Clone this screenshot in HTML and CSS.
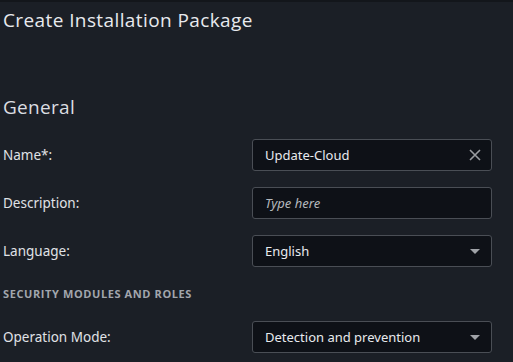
FILE: index.html
```html
<!DOCTYPE html>
<html lang="en">
<head>
  <meta charset="UTF-8">
  <title>Create Installation Package</title>
  <link rel="stylesheet" href="styles.css">
</head>
<body>
  <div class="topline"></div>
  <h1 class="title">Create Installation Package</h1>

  <h2 class="section">General</h2>

  <div class="row">
    <label class="label">Name*:</label>
    <div class="field">
      <span class="value">Update-Cloud</span>
      <svg class="icon" width="12" height="12" viewBox="0 0 12 12">
        <path d="M1 1 L11 11 M11 1 L1 11" stroke="#9a9ca0" stroke-width="1.6" fill="none"/>
      </svg>
    </div>
  </div>

  <div class="row">
    <label class="label">Description:</label>
    <div class="field">
      <span class="placeholder">Type here</span>
    </div>
  </div>

  <div class="row">
    <label class="label">Language:</label>
    <div class="field">
      <span class="value">English</span>
      <span class="caret"></span>
    </div>
  </div>

  <div class="subhead">SECURITY MODULES AND ROLES</div>

  <div class="row">
    <label class="label">Operation Mode:</label>
    <div class="field">
      <span class="value">Detection and prevention</span>
      <span class="caret"></span>
    </div>
  </div>
</body>
</html>
```

FILE: styles.css
```css
body {
  margin: 0;
  background: #1b1f26;
  color: #e4e6ea;
  font-family: "Open Sans", "Noto Sans", sans-serif;
  overflow: hidden;
}
.topline { height: 2px; background: #13161b; }
.title {
  font-family: "Open Sans", sans-serif;
  font-weight: 400;
  font-size: 19px;
  letter-spacing: 0.4px;
  margin: 0;
  padding: 6px 3px 0;
  height: 34px;
  line-height: 24px;
  color: #e8eaee;
}
.section {
  font-weight: 400;
  font-size: 19px;
  letter-spacing: 0.3px;
  line-height: 24px;
  margin: 53px 0 0;
  padding-left: 3px;
  color: #dcdee2;
}
.row {
  display: flex;
  align-items: center;
  margin-top: 16px;
}
.section + .row { margin-top: 20px; }
.label {
  width: 252px;
  padding-left: 3px;
  box-sizing: border-box;
  font-family: "Noto Sans", sans-serif;
  font-size: 13.5px;
  color: #e0e2e6;
}
.field {
  width: 240px;
  height: 32px;
  box-sizing: border-box;
  border: 1px solid #4a4e55;
  border-radius: 3px;
  background: #0e1117;
  display: flex;
  align-items: center;
  justify-content: space-between;
  padding: 0 10px 0 12px;
  font-family: "Noto Sans", sans-serif;
  font-size: 13px;
}
.value { color: #e8eaee; }
.placeholder { color: #b5b8bd; font-style: italic; }
.caret {
  width: 0;
  height: 0;
  border-left: 5px solid transparent;
  border-right: 5px solid transparent;
  border-top: 5px solid #a0a3a8;
  margin-right: 1px;
}
.subhead {
  margin-top: 16px;
  height: 22px;
  line-height: 22px;
  padding-left: 3px;
  font-size: 11px;
  font-weight: 700;
  color: #a2a6ad;
  letter-spacing: 0.6px;
}
.subhead + .row { margin-top: 16px; }
```
